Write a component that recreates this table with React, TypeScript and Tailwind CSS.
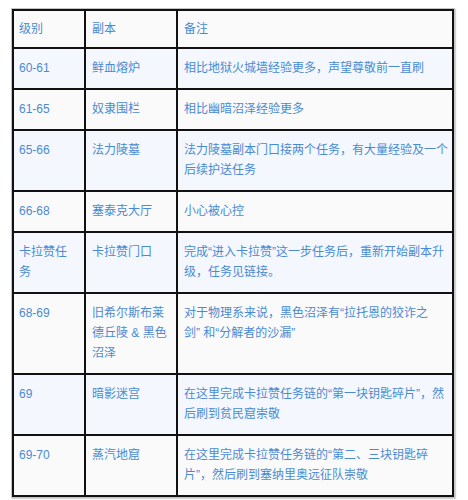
import type { ReactNode } from "react";

type Row = {
  level: string;
  dungeon: ReactNode;
  note: ReactNode;
};

const rows: Row[] = [
  { level: "60-61", dungeon: "鲜血熔炉", note: "相比地狱火城墙经验更多，声望尊敬前一直刷" },
  { level: "61-65", dungeon: "奴隶围栏", note: "相比幽暗沼泽经验更多" },
  { level: "65-66", dungeon: "法力陵墓", note: "法力陵墓副本门口接两个任务，有大量经验及一个后续护送任务" },
  { level: "66-68", dungeon: "塞泰克大厅", note: "小心被心控" },
  {
    level: "卡拉赞任务",
    dungeon: "卡拉赞门口",
    note: "完成“进入卡拉赞”这一步任务后，重新开始副本升级，任务见链接。",
  },
  {
    level: "68-69",
    dungeon: "旧希尔斯布莱德丘陵 & 黑色沼泽",
    note: (
      <>
        对于物理系来说，黑色沼泽有“拉托恩的狡诈之
        <br />
        剑” 和“分解者的沙漏”
      </>
    ),
  },
  { level: "69", dungeon: "暗影迷宫", note: "在这里完成卡拉赞任务链的“第一块钥匙碎片”，然后刷到贫民窟崇敬" },
  {
    level: "69-70",
    dungeon: "蒸汽地窟",
    note: "在这里完成卡拉赞任务链的“第二、三块钥匙碎片”，然后刷到塞纳里奥远征队崇敬",
  },
];

function Cell({
  children,
  bg,
  col,
  head,
}: {
  children: ReactNode;
  bg: string;
  col: number;
  head?: boolean;
}) {
  const pad =
    col === 0 ? "pl-[5px] pr-[10px]" : col === 1 ? "pl-[6px] pr-[6px]" : "pl-[6px] pr-[4px]";
  const vpad = head ? "pt-[8px] pb-[8px]" : "pt-[9px] pb-[10px]";
  return <div className={`${bg} ${pad} ${vpad} leading-[20px]`}>{children}</div>;
}

export default function App() {
  return (
    <div className="min-h-[500px] bg-white pt-[9px] pl-[12px]">
      <div
        className="grid w-[442px] grid-cols-[70px_90px_274px] gap-[2px] bg-[#111] p-[2px] text-[12px] text-[#4a8ad2] shadow-[0_0_0_1px_#c4c4c4,1px_1px_1px_1px_#d4d4d4]"
        style={{ fontFamily: '"Liberation Sans", "Noto Sans CJK SC", sans-serif' }}
      >
        <Cell bg="bg-[#fafafa]" col={0} head>
          级别
        </Cell>
        <Cell bg="bg-[#fafafa]" col={1} head>
          副本
        </Cell>
        <Cell bg="bg-[#fafafa]" col={2} head>
          备注
        </Cell>
        {rows.map((r, i) => {
          const bg = i % 2 === 0 ? "bg-[#f4f8fe]" : "bg-[#fafafa]";
          return [
            <Cell key={`${i}-a`} bg={bg} col={0}>
              {r.level}
            </Cell>,
            <Cell key={`${i}-b`} bg={bg} col={1}>
              {r.dungeon}
            </Cell>,
            <Cell key={`${i}-c`} bg={bg} col={2}>
              {r.note}
            </Cell>,
          ];
        })}
      </div>
    </div>
  );
}
